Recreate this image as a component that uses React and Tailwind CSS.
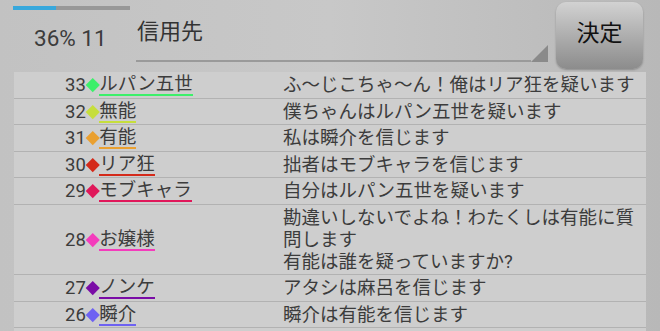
const rows = [
  { no: 33, name: "ルパン五世", color: "#3cf06a", msg: "ふ～じこちゃ～ん！俺はリア狂を疑います" },
  { no: 32, name: "無能", color: "#c6de3c", msg: "僕ちゃんはルパン五世を疑います" },
  { no: 31, name: "有能", color: "#eaa030", msg: "私は瞬介を信じます" },
  { no: 30, name: "リア狂", color: "#d42a1a", msg: "拙者はモブキャラを信じます" },
  { no: 29, name: "モブキャラ", color: "#e0185a", msg: "自分はルパン五世を疑います" },
  { no: 28, name: "お嬢様", color: "#f43cbc", msg: "勘違いしないでよね！わたくしは有能に質問します\n有能は誰を疑っていますか?" },
  { no: 27, name: "ノンケ", color: "#7a0ca6", msg: "アタシは麻呂を信じます" },
  { no: 26, name: "瞬介", color: "#6e62f2", msg: "瞬介は有能を信じます" },
];

function Row({ no, name, color, msg }) {
  return (
    <div className="flex items-center border-b border-[#b2b2b2] bg-[#cecece] pt-[2px] pb-[1.5px]">
      <div className="flex w-[269px] shrink-0 items-center pl-[51px]">
        <span className="leading-[22px]">{no}</span>
        <span className="mx-[2px] h-[9.5px] w-[9.5px] rotate-45" style={{ backgroundColor: color }} />
        <span className="border-b-2 leading-[20px]" style={{ borderColor: color }}>
          {name}
        </span>
      </div>
      <div className="flex-1 whitespace-pre-wrap leading-[22px]">{msg}</div>
    </div>
  );
}

export default function App() {
  return (
    <div
      className="h-[331px] w-[660px] overflow-hidden bg-gradient-to-r from-[#c2c2c2] via-[#c8c8c8] to-[#b8b8b8] text-[#3c3c3c]"
      style={{ fontFamily: 'Roboto, "Noto Sans CJK JP", sans-serif' }}
    >
      {/* Header */}
      <div className="flex h-[72px] items-start">
        <div className="w-[136px] shrink-0 pl-[13px] pt-[6px]">
          <div className="h-[4px] w-[117px] bg-[#989898]">
            <div className="h-full w-[43px] bg-[#38a8dc]" />
          </div>
          <div className="pl-[21px] pt-[13px] text-[22.5px] leading-[30px]">36% 11</div>
        </div>
        <div className="mt-[16px] flex w-[412px] items-end">
          <div className="flex-1 border-b-2 border-[#9a9a9a] pb-[12px] pl-[1px] text-[22px] leading-[32px] text-[#333]">
            信用先
          </div>
          <svg width="17" height="17" viewBox="0 0 17 17">
            <polygon points="17,0 17,17 0,17" fill="#8a8a8a" />
          </svg>
        </div>
        <button className="ml-[8px] mt-[2px] flex h-[67px] w-[87px] items-center justify-center rounded-[10px] bg-gradient-to-b from-[#d2d2d2] to-[#8c8c8c] pb-[2px] text-[23px] text-[#111] shadow-[0_1px_2px_rgba(0,0,0,0.25)]">
          決定
        </button>
      </div>

      {/* Table */}
      <div className="ml-[14px] w-[632px] text-[18.5px]">
        {rows.map((r) => (
          <Row key={r.no} {...r} />
        ))}
        <div className="h-[26px] bg-[#cecece]" />
      </div>
    </div>
  );
}
